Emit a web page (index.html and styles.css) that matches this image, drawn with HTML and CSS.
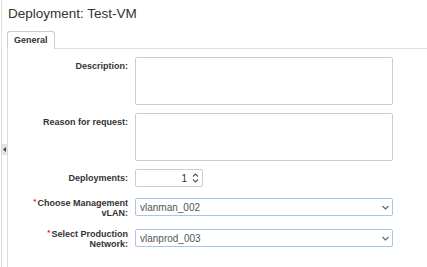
FILE: index.html
```html
<!DOCTYPE html>
<html>
<head>
  <title>Deployment: Test-VM</title>
  <link rel="stylesheet" href="styles.css">
</head>
<body>

<div class="page">
  <!-- collapsed side panel -->
  <div class="splitter">
    <div class="handle">
      <svg width="3" height="5" viewBox="0 0 3 5"><path d="M3 0 L0 2.5 L3 5 Z" fill="#444"/></svg>
    </div>
  </div>

  <div class="main">
    <h1>Deployment: Test-VM</h1>

    <div class="tabs">
      <div class="tab">General</div>
    </div>

    <div class="panel">
      <div class="row">
        <label class="label">Description:</label>
        <textarea class="area"></textarea>
      </div>

      <div class="row">
        <label class="label">Reason for request:</label>
        <textarea class="area"></textarea>
      </div>

      <div class="row short">
        <label class="label">Deployments:</label>
        <div class="spin">
          <span class="spin-value">1</span>
          <svg class="spin-arrows" width="7" height="12" viewBox="0 0 7 12">
            <path d="M1 4.5 L3.5 2 L6 4.5" fill="none" stroke="#555" stroke-width="1.1"/>
            <path d="M1 7.5 L3.5 10 L6 7.5" fill="none" stroke="#555" stroke-width="1.1"/>
          </svg>
        </div>
      </div>

      <div class="row short">
        <label class="label two"><span class="req">*</span>Choose Management vLAN:</label>
        <div class="select">
          <span>vlanman_002</span>
          <svg width="7" height="5" viewBox="0 0 7 5"><path d="M0.5 1 L3.5 4 L6.5 1" fill="none" stroke="#666" stroke-width="1.2"/></svg>
        </div>
      </div>

      <div class="row short">
        <label class="label two"><span class="req">*</span>Select Production Network:</label>
        <div class="select">
          <span>vlanprod_003</span>
          <svg width="7" height="5" viewBox="0 0 7 5"><path d="M0.5 1 L3.5 4 L6.5 1" fill="none" stroke="#666" stroke-width="1.2"/></svg>
        </div>
      </div>
    </div>
  </div>
</div>

</body>
</html>
```

FILE: styles.css
```css
body {
  margin: 0;
  font-family: "Liberation Sans", Arial, sans-serif;
  background-color: #fff;
  color: #333;
}

.page {
  display: flex;
  min-height: 267px;
}

.splitter {
  width: 5px;
  margin-left: 1px;
  border-left: 1px solid #ddd;
  padding-top: 144px;
}

.handle {
  height: 11px;
  background-color: #e4e4e4;
  display: flex;
  align-items: center;
  justify-content: center;
}

.handle svg { display: block; }

.main {
  flex: 1;
  display: flex;
  flex-direction: column;
}

h1 {
  margin: 0;
  padding: 6px 0 0 1px;
  font-size: 13.5px;
  line-height: 16px;
  font-weight: normal;
  color: #333;
}

.tabs {
  display: flex;
  margin-top: 9px;
  border-bottom: 1px solid #ddd;
}

.tab {
  height: 17px;
  margin-bottom: -1px;
  padding: 0 6px;
  border: 1px solid #ccc;
  border-bottom: none;
  border-radius: 3px 3px 0 0;
  background-color: #fff;
  font-size: 9px;
  font-weight: bold;
  line-height: 16px;
}

.panel {
  flex: 1;
  border-left: 1px solid #ddd;
  padding: 8px 0 0 20px;
}

.row {
  display: flex;
  align-items: flex-start;
  margin-bottom: 8px;
}

.row.short { margin-bottom: 11px; }

.label {
  width: 100px;
  margin-right: 7px;
  padding-top: 4px;
  text-align: right;
  font-size: 9px;
  font-weight: bold;
  line-height: 10px;
  color: #333;
}

.label.two { padding-top: 0; }

.req {
  color: #e02020;
  font-size: 8px;
  vertical-align: top;
  line-height: 7px;
  margin-right: 1px;
}

.area {
  display: block;
  width: 258px;
  height: 48px;
  box-sizing: border-box;
  margin: 0;
  border: 1px solid #ccc;
  border-radius: 2px;
  resize: none;
  background-color: #fff;
}

.spin {
  width: 68px;
  height: 18px;
  box-sizing: border-box;
  border: 1px solid #ccc;
  border-radius: 2px;
  display: flex;
  align-items: center;
  justify-content: flex-end;
  font-size: 10px;
  color: #333;
}

.spin-arrows {
  display: block;
  margin: 0 3px 0 5px;
}

.select {
  width: 258px;
  height: 18px;
  box-sizing: border-box;
  border: 1px solid #a9c6e8;
  border-radius: 2px;
  padding: 0 3px 0 4px;
  display: flex;
  align-items: center;
  justify-content: space-between;
  font-size: 10px;
  color: #555;
}

.select svg { display: block; }
```
